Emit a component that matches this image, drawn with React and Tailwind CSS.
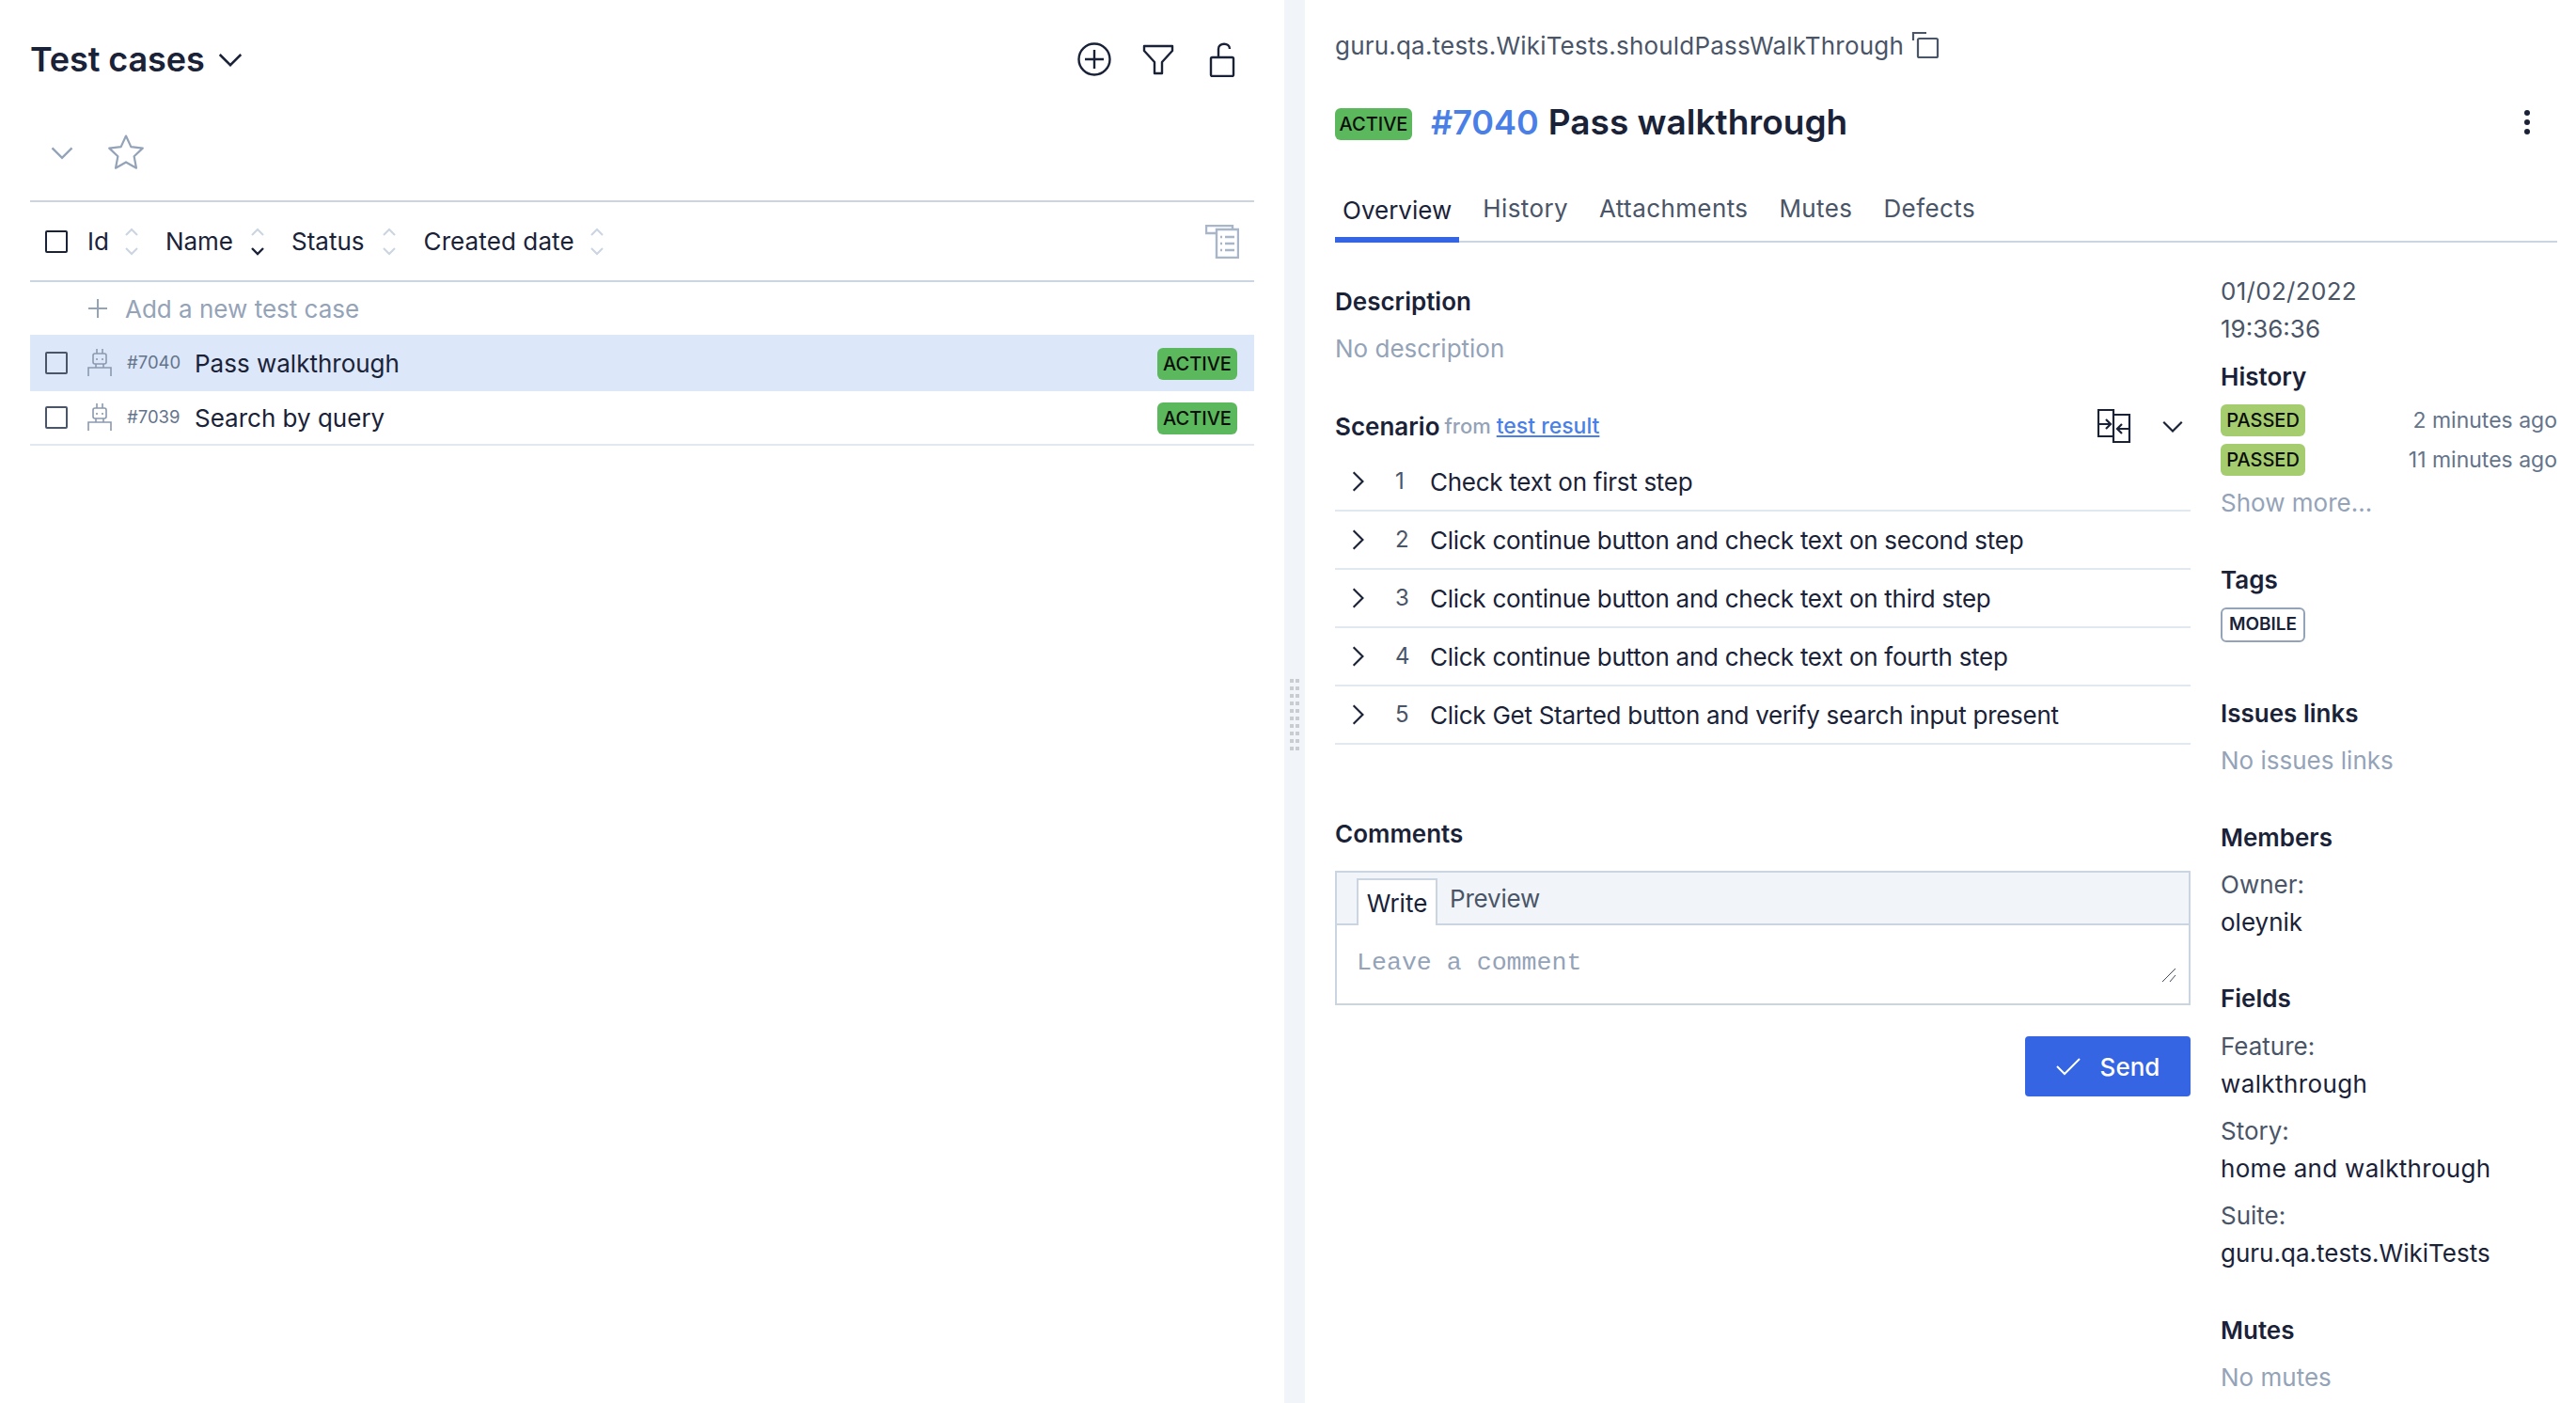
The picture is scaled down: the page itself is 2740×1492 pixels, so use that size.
import React from 'react';

const Chevron = ({ dir = 'down', size = 24, className = '' }) => {
  const paths = {
    down: 'M3 8l9 9 9-9',
    right: 'M8 3l9 9-9 9',
  };
  return (
    <svg width={size} height={size} viewBox="0 0 24 24" fill="none" stroke="currentColor" strokeWidth="2" className={className}>
      <path d={paths[dir]} />
    </svg>
  );
};

const SortIcon = ({ active = false }) => (
  <svg width="16" height="32" viewBox="0 0 16 32" fill="none" strokeWidth="2" className="shrink-0">
    <path d="M2 9l6-6 6 6" stroke="#cbd5e1" />
    <path d="M2 23l6 6 6-6" stroke={active ? '#1a2238' : '#cbd5e1'} strokeWidth={active ? 2.4 : 2} />
  </svg>
);

const Checkbox = ({ dark = false }) => (
  <span className={`block w-[24px] h-[24px] border-2 rounded-[2px] shrink-0 ${dark ? 'border-[#1a2238]' : 'border-[#4a5568]'}`} />
);

const RobotIcon = () => (
  <svg width="26" height="30" viewBox="0 0 26 30" fill="none" stroke="#8a99b0" strokeWidth="1.6" className="shrink-0">
    <path d="M10 0v5M16 0v5" />
    <rect x="6" y="5" width="14" height="11" rx="2" />
    <path d="M10 10v2M16 10v2" />
    <path d="M9 16v4M17 16v4" />
    <path d="M1 29v-9h24v9" />
  </svg>
);

const Badge = ({ children, className = '' }) => (
  <span className={`inline-flex items-center justify-center h-[34px] rounded-[6px] text-[20px] font-medium text-[#0b0f0b] ${className}`}>{children}</span>
);

const Heading = ({ children, className = '' }) => (
  <div className={`h-[40px] leading-[40px] text-[26px] font-semibold text-[#1a2238] ${className}`}>{children}</div>
);

const Row = ({ children, className = '' }) => (
  <div className={`h-[40px] leading-[40px] text-[26px] ${className}`}>{children}</div>
);

const TestRow = ({ id, name, selected }) => (
  <div className={`flex items-center pl-[16px] pr-[18px] ${selected ? 'h-[60px] bg-[#dce7f9]' : 'h-[58px] border-b-2 border-[#e2e8f0]'}`}>
    <Checkbox />
    <span className="ml-[21px]"><RobotIcon /></span>
    <span className="ml-[16px] text-[18.5px] text-[#64748b] w-[72px]">{id}</span>
    <span className="text-[26px] text-[#1a2238]">{name}</span>
    <Badge className="ml-auto mt-[1px] w-[85px] bg-[#5cb85c]">ACTIVE</Badge>
  </div>
);

const Step = ({ n, text }) => (
  <div className="flex items-center h-[62px] border-b-2 border-[#e2e8f0] text-[#1a2238]">
    <Chevron dir="right" size={26} className="ml-[11px] shrink-0" />
    <span className="ml-[27px] w-[37px] text-[24px] text-[#4a5568]">{n}</span>
    <span className="text-[26px] tracking-[-0.27px]">{text}</span>
  </div>
);

const tabs = ['History', 'Attachments', 'Mutes', 'Defects'];
const steps = [
  'Check text on first step',
  'Click continue button and check text on second step',
  'Click continue button and check text on third step',
  'Click continue button and check text on fourth step',
  'Click Get Started button and verify search input present',
];

export default function App() {
  return (
    <div className="flex w-[2740px] h-[1492px] overflow-hidden bg-white font-['Inter',sans-serif]">
      {/* test case list */}
      <div className="w-[1366px] shrink-0 px-[32px]">
        <div className="flex items-center h-[126px] text-[#1a2238]">
          <span className="text-[36px] font-semibold tracking-[-0.1px]">Test cases</span>
          <Chevron size={30} className="ml-[12px]" />
          <div className="ml-auto flex items-center gap-[32px] pr-[16px]">
            <svg width="36" height="36" viewBox="0 0 36 36" fill="none" stroke="currentColor" strokeWidth="2.4">
              <circle cx="18" cy="18" r="16.5" />
              <path d="M18 8v20M8 18h20" />
            </svg>
            <svg width="36" height="36" viewBox="0 0 36 36" fill="none" stroke="currentColor" strokeWidth="2.4" strokeLinejoin="round">
              <path d="M3 4h30v5L22 21v12h-8V21L3 9z" />
            </svg>
            <svg width="36" height="38" viewBox="0 0 36 38" fill="none" stroke="currentColor" strokeWidth="2.4">
              <rect x="6" y="17" width="24" height="20" rx="1.5" />
              <path d="M14 17V8c0-7 12-7 12 0" />
            </svg>
          </div>
        </div>
        <div className="flex items-center h-[87px] pb-[15px] pl-[20px] text-[#94a3b8]">
          <Chevron size={28} />
          <svg width="44" height="44" viewBox="0 0 24 24" fill="none" stroke="currentColor" strokeWidth="1.2" strokeLinejoin="round" className="ml-[32px]">
            <path d="M12 2.5l2.9 6.3 6.8.8-5 4.7 1.3 6.8-6-3.4-6 3.4 1.3-6.8-5-4.7 6.8-.8z" />
          </svg>
        </div>
        <div className="flex items-center h-[87px] border-y-2 border-[#cbd5e1] pl-[16px] pr-[16px] text-[26px] text-[#1a2238]">
          <Checkbox dark />
          <span className="ml-[21px]">Id</span>
          <span className="ml-[16px]"><SortIcon /></span>
          <span className="ml-[28px]">Name</span>
          <span className="ml-[18px]"><SortIcon active /></span>
          <span className="ml-[28px]">Status</span>
          <span className="ml-[18px]"><SortIcon /></span>
          <span className="ml-[29px] tracking-[0.1px]">Created date</span>
          <span className="ml-[16px]"><SortIcon /></span>
          <svg width="36" height="36" viewBox="0 0 36 36" fill="none" stroke="#a9b6c9" strokeWidth="2.4" className="ml-auto">
            <path d="M11 9H1V1h28v4" />
            <path d="M12 5h23v30H12z" />
            <path d="M16 13h2M21 13h10M16 20h2M21 20h10M16 27h2M21 27h10" />
          </svg>
        </div>
        <div className="flex items-center h-[56px] pl-[62px] text-[26px] text-[#94a3b8]">
          <svg width="20" height="20" viewBox="0 0 20 20" fill="none" stroke="currentColor" strokeWidth="2">
            <path d="M10 0v20M0 10h20" />
          </svg>
          <span className="ml-[19px]">Add a new test case</span>
        </div>
        <TestRow id="#7040" name="Pass walkthrough" selected />
        <TestRow id="#7039" name="Search by query" />
      </div>

      {/* splitter */}
      <div className="w-[22px] shrink-0 bg-[#f1f5f9] pt-[722px] pl-[6px]">
        <div className="grid grid-cols-2 gap-x-[2px] gap-y-[4px] w-[10px]">
          {Array.from({ length: 20 }).map((_, i) => (
            <span key={i} className="block w-[4px] h-[4px] bg-[#c9cdd2]" />
          ))}
        </div>
      </div>

      {/* test case details */}
      <div className="w-[1300px] ml-[32px] shrink-0">
        <div className="flex items-center h-[40px] mt-[28px] text-[26px] tracking-[0.2px] text-[#4a5568]">
          <span>guru.qa.tests.WikiTests.shouldPassWalkThrough</span>
          <svg width="30" height="30" viewBox="0 0 30 30" fill="none" stroke="currentColor" strokeWidth="2.2" className="ml-[8px]">
            <path d="M2 10V2h14" />
            <rect x="7" y="8" width="21" height="20" rx="1.5" />
          </svg>
        </div>
        <div className="flex items-center h-[50px] mt-[37px] text-[#1a2238]">
          <Badge className="w-[82px] bg-[#5cb85c] mt-[3px]">ACTIVE</Badge>
          <span className="ml-[20px] text-[36px] font-semibold text-[#4a7fe8]">#7040</span>
          <span className="ml-[10px] text-[37px] font-semibold">Pass walkthrough</span>
          <svg width="8" height="26" viewBox="0 0 8 26" fill="currentColor" className="ml-auto mr-[28px]">
            <circle cx="4" cy="3" r="3" />
            <circle cx="4" cy="13" r="3" />
            <circle cx="4" cy="23" r="3" />
          </svg>
        </div>
        <div className="flex items-end h-[103px] border-b-2 border-[#cbd5e1] text-[26px] tracking-[0.4px] text-[#4a5568] gap-[17px]">
          <span className="h-[58px] leading-[48px] px-[8px] border-b-[6px] border-[#3565e3] text-[#1a2238] tracking-normal mb-[-2px]">Overview</span>
          {tabs.map((t) => (
            <span key={t} className="h-[58px] leading-[48px] px-[8px]">{t}</span>
          ))}
        </div>

        <div className="flex">
          <div className="w-[910px] shrink-0">
            <Heading className="mt-[43px]">Description</Heading>
            <Row className="mt-[10px] text-[#94a3b8]">No description</Row>
            <div className="flex items-center h-[40px] mt-[42px]">
              <span className="text-[26px] font-semibold text-[#1a2238]">Scenario</span>
              <span className="ml-[5px] text-[22px] font-medium text-[#94a3b8]">from</span>
              <span className="ml-[6px] text-[23px] font-medium text-[#4a7fe8] underline">test result</span>
              <svg width="36" height="36" viewBox="0 0 36 36" fill="none" stroke="#1a2238" strokeWidth="2.2" className="ml-auto">
                <path d="M1 1h16v28H1zM17 6h17v29H17z" />
                <path d="M1 16h13M9 11l5 5-5 5M34 21H21M26 16l-5 5 5 5" />
              </svg>
              <Chevron size={26} className="ml-[31px] mr-[6px] text-[#1a2238]" />
            </div>
            <div className="mt-[9px]">
              {steps.map((s, i) => (
                <Step key={s} n={i + 1} text={s} />
              ))}
            </div>
            <Heading className="mt-[75px]">Comments</Heading>
            <div className="mt-[19px] h-[143px] border-2 border-[#cbd5e1]">
              <div className="flex h-[56px] bg-[#f1f5f9] border-b-2 border-[#cbd5e1] pl-[21px] text-[26px]">
                <span className="h-[50px] mt-[6px] w-[86px] bg-white border-x-2 border-t-2 border-[#cbd5e1] text-center leading-[50px] text-[#1a2238]">Write</span>
                <span className="ml-[13px] mt-[8px] leading-[40px] tracking-[-0.2px] text-[#4a5568]">Preview</span>
              </div>
              <div className="relative h-[83px] pl-[21px] pt-[20px] font-['Liberation_Mono',monospace] text-[26.6px] leading-[40px] text-[#94a3b8]">
                Leave a comment
                <svg width="16" height="16" viewBox="0 0 16 16" fill="none" stroke="#3f4a5c" strokeWidth="1" className="absolute right-[13px] bottom-[22px]">
                  <path d="M1 15L15 1M9 15l6-7" />
                </svg>
              </div>
            </div>
            <div className="flex justify-end mt-[33px]">
              <button className="flex items-center justify-center gap-[21px] w-[176px] h-[64px] rounded-[4px] bg-[#3565e3] text-white text-[26px] font-medium">
                <svg width="26" height="20" viewBox="0 0 26 20" fill="none" stroke="currentColor" strokeWidth="2">
                  <path d="M1 10l8 8L25 2" />
                </svg>
                Send
              </button>
            </div>
          </div>

          <div className="ml-[32px] w-[358px] text-[#4a5568]">
            <Row className="mt-[32px] tracking-[0.3px]">01/02/2022</Row>
            <Row>19:36:36</Row>
            <Heading className="mt-[11px]">History</Heading>
            <div className="flex items-center justify-between mt-[9px] h-[34px] text-[23px] text-[#64748b]">
              <Badge className="w-[90px] bg-[#a5cc6e]">PASSED</Badge>
              <span>2 minutes ago</span>
            </div>
            <div className="flex items-center justify-between mt-[8px] h-[34px] text-[23px] text-[#64748b]">
              <Badge className="w-[90px] bg-[#a5cc6e]">PASSED</Badge>
              <span>11 minutes ago</span>
            </div>
            <Row className="mt-[9px] text-[#94a3b8]">Show more...</Row>
            <Heading className="mt-[42px]">Tags</Heading>
            <span className="mt-[9px] flex items-center justify-center w-[90px] h-[37px] border-2 border-[#94a3b8] rounded-[6px] text-[19px] font-semibold text-[#1a2238]">MOBILE</span>
            <Heading className="mt-[56px]">Issues links</Heading>
            <Row className="mt-[10px] text-[#94a3b8]">No issues links</Row>
            <Heading className="mt-[42px]">Members</Heading>
            <Row className="mt-[10px]">Owner:</Row>
            <Row className="text-[#1a2238]">oleynik</Row>
            <Heading className="mt-[41px]">Fields</Heading>
            <Row className="mt-[11px]">Feature:</Row>
            <Row className="text-[#1a2238] tracking-[0.4px]">walkthrough</Row>
            <Row className="mt-[10px]">Story:</Row>
            <Row className="text-[#1a2238] tracking-[0.3px]">home and walkthrough</Row>
            <Row className="mt-[10px]">Suite:</Row>
            <Row className="text-[#1a2238]">guru.qa.tests.WikiTests</Row>
            <Heading className="mt-[42px]">Mutes</Heading>
            <Row className="mt-[10px] text-[#94a3b8]">No mutes</Row>
          </div>
        </div>
      </div>
    </div>
  );
}
